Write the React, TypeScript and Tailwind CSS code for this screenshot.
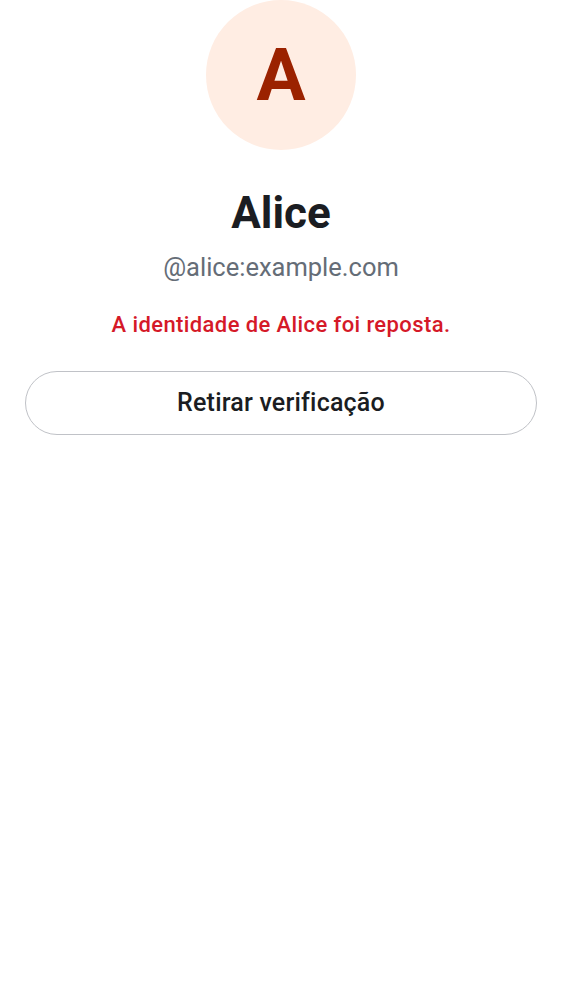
export default function App() {
  return (
    <div
      className="min-h-[1000px] w-full bg-white flex flex-col items-center px-[25px]"
      style={{ fontFamily: "Roboto, 'Noto Sans', sans-serif" }}
    >
      {/* Avatar */}
      <div className="w-[150px] h-[150px] rounded-full bg-[#ffede3] flex items-center justify-center">
        <span className="text-[73px] font-bold leading-none text-[#9b2200]">A</span>
      </div>

      {/* Name */}
      <h1 className="mt-[35px] text-[44px] leading-[56px] font-bold text-[#1b1d22]">Alice</h1>
      <p className="mt-[10px] text-[25.5px] leading-[32px] text-[#656d77]">@alice:example.com</p>

      {/* Warning */}
      <p className="mt-[28px] text-[22px] leading-[28px] font-medium tracking-[0.4px] text-[#d51928]">
        A identidade de Alice foi reposta.
      </p>

      {/* Action */}
      <button className="mt-[32px] w-full h-[64px] rounded-full border border-[#c0c2c7] bg-white text-[25px] font-medium tracking-[0.2px] text-[#1b1d22]">
        Retirar verificação
      </button>
    </div>
  );
}
